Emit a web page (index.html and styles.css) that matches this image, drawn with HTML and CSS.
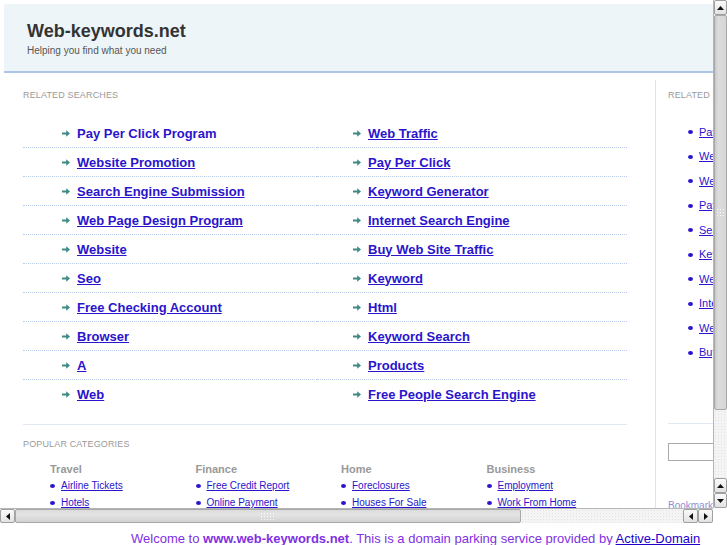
FILE: index.html
```html
<!DOCTYPE html>
<html lang="en">
<head>
  <meta charset="UTF-8">
  <title>Web-keywords.net</title>
  <link rel="stylesheet" href="styles.css">
</head>
<body>

<div class="frame">
  <div class="viewport">
    <div class="page">
      <div class="header">
        <div class="title">Web-keywords.net</div>
        <div class="tagline">Helping you find what you need</div>
      </div>

      <div class="content">
        <div class="main">
          <div class="section-title">Related Searches</div>
          <div class="links">
            <div class="link-cell"><svg class="arrow" width="8" height="7" viewBox="0 0 8 7"><path d="M0 2.4h4.2V0.2L8 3.5 4.2 6.8V4.6H0z"/></svg><a class="plain">Pay Per Click Program</a></div>
            <div class="link-cell"><svg class="arrow" width="8" height="7" viewBox="0 0 8 7"><path d="M0 2.4h4.2V0.2L8 3.5 4.2 6.8V4.6H0z"/></svg><a>Web Traffic</a></div>
            <div class="link-cell"><svg class="arrow" width="8" height="7" viewBox="0 0 8 7"><path d="M0 2.4h4.2V0.2L8 3.5 4.2 6.8V4.6H0z"/></svg><a>Website Promotion</a></div>
            <div class="link-cell"><svg class="arrow" width="8" height="7" viewBox="0 0 8 7"><path d="M0 2.4h4.2V0.2L8 3.5 4.2 6.8V4.6H0z"/></svg><a>Pay Per Click</a></div>
            <div class="link-cell"><svg class="arrow" width="8" height="7" viewBox="0 0 8 7"><path d="M0 2.4h4.2V0.2L8 3.5 4.2 6.8V4.6H0z"/></svg><a>Search Engine Submission</a></div>
            <div class="link-cell"><svg class="arrow" width="8" height="7" viewBox="0 0 8 7"><path d="M0 2.4h4.2V0.2L8 3.5 4.2 6.8V4.6H0z"/></svg><a>Keyword Generator</a></div>
            <div class="link-cell"><svg class="arrow" width="8" height="7" viewBox="0 0 8 7"><path d="M0 2.4h4.2V0.2L8 3.5 4.2 6.8V4.6H0z"/></svg><a>Web Page Design Program</a></div>
            <div class="link-cell"><svg class="arrow" width="8" height="7" viewBox="0 0 8 7"><path d="M0 2.4h4.2V0.2L8 3.5 4.2 6.8V4.6H0z"/></svg><a>Internet Search Engine</a></div>
            <div class="link-cell"><svg class="arrow" width="8" height="7" viewBox="0 0 8 7"><path d="M0 2.4h4.2V0.2L8 3.5 4.2 6.8V4.6H0z"/></svg><a>Website</a></div>
            <div class="link-cell"><svg class="arrow" width="8" height="7" viewBox="0 0 8 7"><path d="M0 2.4h4.2V0.2L8 3.5 4.2 6.8V4.6H0z"/></svg><a>Buy Web Site Traffic</a></div>
            <div class="link-cell"><svg class="arrow" width="8" height="7" viewBox="0 0 8 7"><path d="M0 2.4h4.2V0.2L8 3.5 4.2 6.8V4.6H0z"/></svg><a>Seo</a></div>
            <div class="link-cell"><svg class="arrow" width="8" height="7" viewBox="0 0 8 7"><path d="M0 2.4h4.2V0.2L8 3.5 4.2 6.8V4.6H0z"/></svg><a>Keyword</a></div>
            <div class="link-cell"><svg class="arrow" width="8" height="7" viewBox="0 0 8 7"><path d="M0 2.4h4.2V0.2L8 3.5 4.2 6.8V4.6H0z"/></svg><a>Free Checking Account</a></div>
            <div class="link-cell"><svg class="arrow" width="8" height="7" viewBox="0 0 8 7"><path d="M0 2.4h4.2V0.2L8 3.5 4.2 6.8V4.6H0z"/></svg><a>Html</a></div>
            <div class="link-cell"><svg class="arrow" width="8" height="7" viewBox="0 0 8 7"><path d="M0 2.4h4.2V0.2L8 3.5 4.2 6.8V4.6H0z"/></svg><a>Browser</a></div>
            <div class="link-cell"><svg class="arrow" width="8" height="7" viewBox="0 0 8 7"><path d="M0 2.4h4.2V0.2L8 3.5 4.2 6.8V4.6H0z"/></svg><a>Keyword Search</a></div>
            <div class="link-cell"><svg class="arrow" width="8" height="7" viewBox="0 0 8 7"><path d="M0 2.4h4.2V0.2L8 3.5 4.2 6.8V4.6H0z"/></svg><a>A</a></div>
            <div class="link-cell"><svg class="arrow" width="8" height="7" viewBox="0 0 8 7"><path d="M0 2.4h4.2V0.2L8 3.5 4.2 6.8V4.6H0z"/></svg><a>Products</a></div>
            <div class="link-cell last"><svg class="arrow" width="8" height="7" viewBox="0 0 8 7"><path d="M0 2.4h4.2V0.2L8 3.5 4.2 6.8V4.6H0z"/></svg><a>Web</a></div>
            <div class="link-cell last"><svg class="arrow" width="8" height="7" viewBox="0 0 8 7"><path d="M0 2.4h4.2V0.2L8 3.5 4.2 6.8V4.6H0z"/></svg><a>Free People Search Engine</a></div>
          </div>

          <div class="popular">
            <div class="section-title">Popular Categories</div>
            <div class="categories">
              <div class="cat">
                <div class="cat-title">Travel</div>
                <ul>
                  <li><a>Airline Tickets</a></li>
                  <li><a>Hotels</a></li>
                </ul>
              </div>
              <div class="cat">
                <div class="cat-title">Finance</div>
                <ul>
                  <li><a>Free Credit Report</a></li>
                  <li><a>Online Payment</a></li>
                </ul>
              </div>
              <div class="cat">
                <div class="cat-title">Home</div>
                <ul>
                  <li><a>Foreclosures</a></li>
                  <li><a>Houses For Sale</a></li>
                </ul>
              </div>
              <div class="cat">
                <div class="cat-title">Business</div>
                <ul>
                  <li><a>Employment</a></li>
                  <li><a>Work From Home</a></li>
                </ul>
              </div>
            </div>
          </div>
        </div>

        <div class="side">
          <div class="section-title">Related Searches</div>
          <ul class="side-links">
            <li><a>Pay Per Click Program</a></li>
            <li><a>Web Traffic</a></li>
            <li><a>Website Promotion</a></li>
            <li><a>Pay Per Click</a></li>
            <li><a>Search Engine Submission</a></li>
            <li><a>Keyword Generator</a></li>
            <li><a>Web Page Design Program</a></li>
            <li><a>Internet Search Engine</a></li>
            <li><a>Website</a></li>
            <li><a>Buy Web Site Traffic</a></li>
          </ul>
          <div class="search-box">
            <input type="text">
          </div>
          <div class="bookmark">Bookmark this page</div>
        </div>
      </div>
    </div>
  </div>

  <!-- vertical scrollbar -->
  <div class="vbar">
    <div class="sb-btn"><svg width="7" height="4" viewBox="0 0 7 4"><path d="M0 4L3.5 0 7 4z"/></svg></div>
    <div class="vthumb"><span class="grip"></span></div>
    <div class="vtrack"></div>
    <div class="sb-btn"><svg width="7" height="4" viewBox="0 0 7 4"><path d="M0 4L3.5 0 7 4z"/></svg></div>
    <div class="sb-btn"><svg width="7" height="4" viewBox="0 0 7 4"><path d="M0 0L3.5 4 7 0z"/></svg></div>
  </div>

  <!-- horizontal scrollbar -->
  <div class="hbar">
    <div class="sb-btn h"><svg width="4" height="7" viewBox="0 0 4 7"><path d="M4 0L0 3.5 4 7z"/></svg></div>
    <div class="hthumb"><span class="grip"></span></div>
    <div class="htrack"></div>
    <div class="sb-btn h"><svg width="4" height="7" viewBox="0 0 4 7"><path d="M4 0L0 3.5 4 7z"/></svg></div>
    <div class="sb-btn h"><svg width="4" height="7" viewBox="0 0 4 7"><path d="M0 0L4 3.5 0 7z"/></svg></div>
  </div>
  <div class="corner"></div>
</div>

<div class="footer">
  Welcome to <b>www.web-keywords.net</b>. This is a domain parking service provided by <a>Active-Domain</a>
</div>

</body>
</html>
```

FILE: styles.css
```css
html, body {
  margin: 0;
  padding: 0;
  background: #fff;
  font-family: "Liberation Sans", Arial, sans-serif;
}

a {
  color: #2a14cc;
  text-decoration: underline;
  cursor: pointer;
}

ul {
  list-style: none;
  margin: 0;
  padding: 0;
}

/* frame with its scrollbars */
.frame {
  display: grid;
  grid-template-columns: 713px 14px;
  grid-template-rows: 508px 15px;
  width: 727px;
  height: 523px;
  overflow: hidden;
}

.viewport {
  overflow: hidden;
}

.page {
  width: 935px;
  padding: 4px;
}

.header {
  height: 69px;
  box-sizing: border-box;
  background: #eef5f8;
  border-bottom: 2px solid #aec5e8;
  padding: 16px 0 0 23px;
}

.title {
  font-size: 18px;
  line-height: 22px;
  font-weight: bold;
  color: #333;
}

.tagline {
  font-size: 10px;
  line-height: 14px;
  margin-top: 2px;
  color: #555;
}

.content {
  display: flex;
  align-items: flex-start;
}

.section-title {
  font-size: 9px;
  line-height: 12px;
  letter-spacing: 0.15px;
  text-transform: uppercase;
  color: #9a9a9a;
}

.main {
  width: 604px;
  margin-left: 19px;
  padding-top: 16px;
}

.links {
  display: grid;
  grid-template-columns: 294px 1fr;
  margin-top: 18px;
  margin-bottom: 16px;
}

.link-cell {
  display: flex;
  align-items: center;
  gap: 7px;
  height: 28px;
  padding-left: 39px;
  border-bottom: 1px dotted #b9cbe6;
}

.link-cell:nth-child(even) {
  padding-left: 36px;
}

.link-cell.last {
  border-bottom: none;
}

.link-cell a {
  font-size: 13px;
  font-weight: bold;
}

.link-cell a.plain {
  text-decoration: none;
}

.arrow {
  fill: #3e8a84;
  flex: none;
}

.popular {
  border-top: 1px solid #e1e9f5;
  padding-top: 13px;
}

.categories {
  display: grid;
  grid-template-columns: repeat(4, 145.5px);
  padding-left: 27px;
  margin-top: 12px;
}

.cat-title {
  font-size: 11px;
  line-height: 14px;
  font-weight: bold;
  color: #999;
}

.cat ul {
  margin-top: 1px;
}

.cat li,
.side-links li {
  display: flex;
  align-items: center;
  gap: 6px;
  font-size: 10px;
  line-height: 17px;
}

.cat li::before,
.side-links li::before {
  content: "";
  width: 5px;
  height: 4px;
  border-radius: 50%;
  background: #2a14cc;
  flex: none;
}

.side {
  margin-left: 28px;
  margin-top: 7px;
  border-left: 1px solid #dde4f0;
  padding: 9px 0 0 12px;
  width: 220px;
  height: 440px;
}

.side-links {
  margin-top: 19px;
  padding-left: 20px;
}

.side-links li {
  height: 24.5px;
  font-size: 11px;
}

.search-box {
  border-top: 1px solid #e1e9f5;
  margin-top: 58px;
  padding-top: 19px;
}

.search-box input {
  display: block;
  width: 150px;
  height: 18px;
  box-sizing: border-box;
  border: 1px solid #aaa;
  margin: 0;
  padding: 0;
}

.bookmark {
  margin-top: 39px;
  font-size: 10px;
  color: #8f8fd6;
}

/* scrollbars */
.vbar {
  display: flex;
  flex-direction: column;
  background: #f3f3f3;
  border-left: 1px solid #b5b5b5;
}

.hbar {
  display: flex;
  background: #f3f3f3;
  border-top: 1px solid #b5b5b5;
}

.corner {
  background: #fff;
}

.sb-btn {
  flex: none;
  height: 15px;
  display: flex;
  align-items: center;
  justify-content: center;
  background: linear-gradient(#fbfbfb, #e2e2e2);
  border: 1px solid #a0a0a0;
  border-radius: 2px;
  box-sizing: border-box;
  fill: #111;
}

.sb-btn.h {
  width: 15px;
  height: auto;
}

.vthumb {
  height: 395px;
  flex: none;
  background: linear-gradient(90deg, #c9c9c9, #dcdcdc 30%, #d6d6d6);
  border: 1px solid #a8a8a8;
  border-radius: 2px;
  box-sizing: border-box;
  display: flex;
  align-items: center;
  justify-content: center;
}

.vtrack,
.htrack {
  flex: 1;
  background-color: #f4f4f4;
  background-image: radial-gradient(#e2e2e2 0.6px, transparent 0.7px);
  background-size: 3px 3px;
}

.hthumb {
  width: 506px;
  flex: none;
  background: linear-gradient(#dcdcdc, #e4e4e4 40%, #d2d2d2);
  border: 1px solid #a8a8a8;
  border-radius: 2px;
  box-sizing: border-box;
  display: flex;
  align-items: center;
  justify-content: center;
}

.grip {
  width: 10px;
  height: 10px;
  background-image: radial-gradient(#fafafa 0.7px, transparent 0.8px);
  background-size: 3px 3px;
}

.hthumb .grip {
  width: 16px;
  height: 8px;
}

.footer {
  padding: 8px 0 0 131px;
  font-size: 13px;
  line-height: 15px;
  color: #8030e2;
  white-space: nowrap;
}

.footer a {
  color: #2200cc;
}
```
